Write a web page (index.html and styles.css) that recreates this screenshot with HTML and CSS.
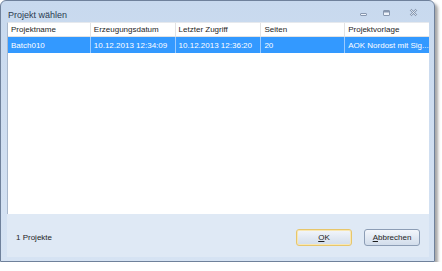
FILE: index.html
```html
<!DOCTYPE html>
<html lang="de">
<head>
  <meta charset="UTF-8">
  <title>Projekt wählen</title>
  <link rel="stylesheet" href="styles.css">
</head>
<body>
  <div class="window">
    <div class="titlebar">
      <span class="title">Projekt wählen</span>
      <div class="caption-buttons">
        <svg class="cap min" width="9" height="8" viewBox="0 0 9 8">
          <rect x="1.5" y="4.5" width="6" height="2" rx="0.5" fill="#eef3fa" stroke="#8797af"/>
        </svg>
        <svg class="cap max" width="9" height="8" viewBox="0 0 9 8">
          <rect x="1.5" y="1.5" width="6" height="5" rx="0.5" fill="#eef3fa" stroke="#8797af"/>
          <rect x="2" y="2" width="5" height="1.5" fill="#8797af"/>
        </svg>
        <svg class="cap close" width="9" height="9" viewBox="0 0 9 9">
          <path d="M1.5 1.5 L7.5 7.5 M7.5 1.5 L1.5 7.5" stroke="#8797af" stroke-width="2.2"/>
          <path d="M1.5 1.5 L7.5 7.5 M7.5 1.5 L1.5 7.5" stroke="#eef3fa" stroke-width="0.8"/>
        </svg>
      </div>
    </div>
    <div class="content">
      <div class="list">
        <div class="row header">
          <div class="cell c1">Projektname</div>
          <div class="cell c2">Erzeugungsdatum</div>
          <div class="cell c3">Letzter Zugriff</div>
          <div class="cell c4">Seiten</div>
          <div class="cell c5">Projektvorlage</div>
        </div>
        <div class="row selected">
          <div class="cell c1">Batch010</div>
          <div class="cell c2">10.12.2013 12:34:09</div>
          <div class="cell c3">10.12.2013 12:36:20</div>
          <div class="cell c4">20</div>
          <div class="cell c5">AOK Nordost mit Sig...</div>
        </div>
      </div>
      <div class="footer">
        <span class="count">1 Projekte</span>
        <div class="buttons">
          <button class="btn default"><u>O</u>K</button>
          <button class="btn"><u>A</u>bbrechen</button>
        </div>
      </div>
    </div>
  </div>
</body>
</html>
```

FILE: styles.css
```css
body {
  margin: 0;
  padding: 0;
  background: #ffffff;
  font-family: "Liberation Sans", Arial, sans-serif;
  font-size: 8px;
  color: #1e1e1e;
}
.window {
  width: 433px;
  height: 260px;
  border: 1px solid #6f819b;
  border-radius: 6px 6px 0 0;
  background: linear-gradient(#c8d9ee, #d6e3f3);
  box-shadow: 3px 3px 3px rgba(0, 0, 0, 0.35);
  display: flex;
  flex-direction: column;
}
.titlebar {
  height: 21px;
  display: flex;
  align-items: center;
  justify-content: space-between;
  padding: 0 16px 0 7px;
}
.title {
  font-size: 9px;
  color: #2b3a50;
  margin-top: 7px;
}
.caption-buttons {
  display: flex;
  align-items: center;
  margin-top: 2px;
}
.cap.max {
  margin-left: 14px;
}
.cap.close {
  margin-left: 18px;
}
.content {
  flex: 1;
  display: flex;
  flex-direction: column;
  margin: 0 5px 4px 6px;
}
.list {
  height: 191px;
  background: #fff;
  border-left: 1px solid #a9b8cc;
  border-top: 1px solid #e6e9ee;
}
.row {
  display: flex;
}
.header {
  height: 13px;
  border-bottom: 1px solid #e3e3e3;
}
.header .cell {
  border-right: 1px solid #e3e3e3;
  color: #1e1e1e;
}
.selected {
  height: 16px;
  background: #3399ff;
  color: #ffffff;
}
.selected .cell {
  border-right: 1px solid #9ccbff;
}
.cell {
  display: flex;
  align-items: center;
  padding-left: 3px;
  box-sizing: border-box;
  white-space: nowrap;
  overflow: hidden;
}
.c1 { width: 83px; }
.c2 { width: 85px; }
.c3 { width: 86px; }
.c4 { width: 84px; }
.c5 { width: 84px; border-right: none !important; }
.footer {
  flex: 1;
  background: #dfe9f5;
  display: flex;
  align-items: center;
  justify-content: space-between;
  padding: 0 9px 0 9px;
}
.count {
  margin-top: 3px;
}
.buttons {
  display: flex;
  gap: 12px;
  margin-top: 3px;
}
.btn {
  width: 56px;
  height: 17px;
  padding: 0;
  font-family: "Liberation Sans", Arial, sans-serif;
  font-size: 8px;
  color: #1e1e1e;
  border: 1px solid #8c9db5;
  border-radius: 3px;
  background: linear-gradient(#f3f6fb, #e2e9f3 50%, #d2ddeb);
}
.btn.default {
  border-color: #e7c66b;
  box-shadow: inset 0 0 0 1px #f8e7b3;
}
```
